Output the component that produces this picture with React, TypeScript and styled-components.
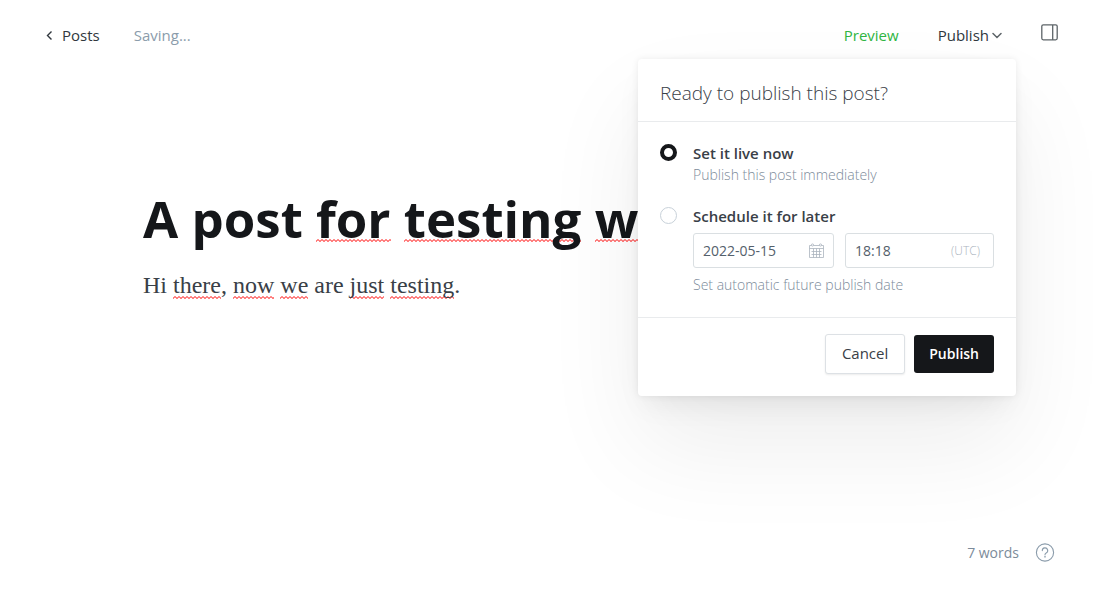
import React, { useState } from "react";
import styled, { createGlobalStyle, css } from "styled-components";

const sans = `"Open Sans", "Noto Sans", sans-serif`;

const GlobalStyle = createGlobalStyle`
  *, *::before, *::after { box-sizing: border-box; }
  body { margin: 0; background: #fff; color: #394047; font-family: ${sans}; font-size: 15px; line-height: 20px; }
  button, input { font: inherit; color: inherit; }
`;

const Screen = styled.div`
  display: flex;
  flex-direction: column;
  min-height: 100vh;
`;

const Header = styled.header`
  display: flex;
  align-items: center;
  justify-content: space-between;
  height: 70px;
  padding: 0 42px 0 45px;
`;

const HeaderGroup = styled.div<{ $gap: number }>`
  display: flex;
  align-items: center;
  gap: ${(p) => p.$gap}px;
`;

const BackLink = styled.a`
  display: flex;
  align-items: center;
  gap: 8px;
  color: #30373d;
  font-weight: 500;
  text-decoration: none;
`;

const Status = styled.span`
  color: #8b9cab;
`;

const TextButton = styled.button<{ $accent?: boolean }>`
  display: flex;
  align-items: center;
  gap: 3px;
  padding: 0;
  border: 0;
  background: none;
  font-weight: 500;
  color: ${(p) => (p.$accent ? "#30b643" : "#30373d")};
  cursor: pointer;
`;

const IconButton = styled.button`
  display: flex;
  padding: 0;
  border: 0;
  background: none;
  color: #8b9cab;
  cursor: pointer;
`;

const SettingsButton = styled(IconButton)`
  padding-bottom: 6px;
  color: #5d6468;
`;

const PublishMenu = styled.div`
  position: relative;
`;

const Popup = styled.form`
  position: absolute;
  z-index: 2;
  top: 34px;
  right: -14px;
  width: 378px;
  background: #fff;
  border-radius: 4px;
  box-shadow: 0 0 7px rgba(0, 0, 0, 0.08), 0 14px 28px -8px rgba(0, 0, 0, 0.08),
    0 50px 100px rgba(0, 0, 0, 0.07);
`;

const PopupTitle = styled.h2`
  margin: 0;
  padding: 22px 22px 16px;
  border-bottom: 1px solid #e9ebed;
  font-size: 19px;
  line-height: 24px;
  font-weight: 300;
`;

const Options = styled.fieldset`
  display: flex;
  flex-direction: column;
  gap: 22px;
  margin: 0;
  padding: 22px;
  border: 0;
`;

const Option = styled.div`
  display: grid;
  grid-template-columns: 17px minmax(0, 1fr);
  column-gap: 16px;
`;

const Radio = styled.input`
  appearance: none;
  width: 17px;
  height: 17px;
  margin: 0;
  border: 1px solid #c8d1d9;
  border-radius: 50%;
  background: #fff;
  &:checked { border: 4px solid #15171a; }
`;

const OptionLabel = styled.label`
  display: block;
  padding-bottom: 2px;
  line-height: 18px;
  font-weight: 600;
`;

const Hint = styled.p`
  margin: 1px 0 0;
  font-size: 14px;
  font-weight: 300;
  color: #7c8b9a;
`;

const Fields = styled.div`
  display: grid;
  grid-template-columns: 141fr 149fr;
  gap: 11px;
  margin: 6px 0 7px;
`;

const Field = styled.div`
  display: flex;
  align-items: center;
  min-width: 0;
  height: 35px;
  padding: 0 9px;
  border: 1px solid #dadfe2;
  border-radius: 3px;
  color: #abb4be;
`;

const FieldInput = styled.input`
  flex: 1;
  min-width: 0;
  padding: 0;
  border: 0;
  outline: 0;
  background: none;
  font-size: 14px;
  color: #54606b;
`;

const Zone = styled.span`
  padding-right: 4px;
  font-size: 12px;
  font-weight: 300;
`;

const Actions = styled.footer`
  display: flex;
  justify-content: flex-end;
  align-items: center;
  gap: 9px;
  padding: 16px 22px 22px;
  border-top: 1px solid #e9ebed;
`;

const Button = styled.button<{ $primary?: boolean }>`
  height: 40px;
  padding: 0 16px 2px;
  border: 1px solid #dde1e5;
  border-radius: 3px;
  background: #fff;
  font-weight: 500;
  box-shadow: 0 1px 2px rgba(0, 0, 0, 0.08);
  cursor: pointer;
  ${(p) =>
    p.$primary &&
    css`
      height: 38px;
      padding: 0 15px;
      border: 0;
      background: #15171a;
      color: #fff;
      font-size: 14px;
      font-weight: 600;
      box-shadow: none;
    `}
`;

const Editor = styled.main`
  flex: 1;
  padding: 114px 143px 0;
`;

const Title = styled.h1`
  margin: 0;
  color: #15171a;
  font-size: 51px;
  line-height: 68px;
  font-weight: 700;
`;

const Body = styled.p`
  margin: 17px 0 0;
  font-family: "Liberation Serif", serif;
  font-size: 24px;
  line-height: 32px;
`;

const zigzag = `url("data:image/svg+xml,%3Csvg xmlns='http://www.w3.org/2000/svg' width='4' height='3'%3E%3Cpath d='M-1 3.5 2 .5l3 3' fill='none' stroke='%23f00'/%3E%3C/svg%3E")`;

const Misspelt = styled.span<{ $lift: number }>`
  padding-bottom: 2px;
  background: ${zigzag} 0 calc(100% - ${(p) => p.$lift}px) / 4px 3px repeat-x;
`;

const Footer = styled.footer`
  display: flex;
  justify-content: flex-end;
  align-items: center;
  gap: 16px;
  padding: 0 45px 41px;
  font-size: 14px;
  color: #7c8b9a;
`;

const ChevronLeft = () => (
  <svg width="9" height="10" viewBox="0 0 9 10" fill="none" stroke="#30373d" strokeWidth="1.4" aria-hidden="true">
    <path d="M6.5 1.5 2.5 5.5l4 4" />
  </svg>
);

const ChevronDown = () => (
  <svg width="10" height="8" viewBox="0 0 10 8" fill="none" stroke="#5d6468" strokeWidth="1.5" strokeLinecap="round" aria-hidden="true">
    <path d="m1 2.5 4 4 4-4" />
  </svg>
);

const SidebarIcon = () => (
  <svg width="17" height="17" viewBox="0 0 17 17" fill="none" stroke="currentColor" strokeWidth="1.3" aria-hidden="true">
    <rect x=".8" y=".8" width="15.4" height="15" rx="1.5" />
    <path d="M11.7 1v15" />
  </svg>
);

const CalendarIcon = () => (
  <svg width="15" height="15" viewBox="0 0 15 15" fill="none" stroke="currentColor" strokeWidth=".8" aria-hidden="true">
    <path d="M2.5 2.5h-2v12h14v-12h-2M4.5 2.5h6M.5 5.5h14M2.5 8.5h10M2.5 11.5h10M4.5 5.5v9M7.5 5.5v9M10.5 5.5v9" />
    <circle cx="3.5" cy="2" r="1.1" />
    <circle cx="11.5" cy="2" r="1.1" />
  </svg>
);

const HelpIcon = () => (
  <svg width="20" height="20" viewBox="0 0 20 20" fill="none" stroke="currentColor" strokeWidth="1.1" strokeLinecap="round" aria-hidden="true">
    <circle cx="10" cy="9.5" r="8.6" />
    <path d="M7.3 7.6a2.7 2.7 0 1 1 3.9 2.4c-.8.4-1.2.8-1.2 1.7" />
    <circle cx="10" cy="13.7" r=".3" />
  </svg>
);

const bodyText: [string, boolean][] = [
  ["Hi ", false], ["there", true], [", ", false], ["now", true], [" ", false], ["we", true],
  [" are ", false], ["just", true], [" ", false], ["testing", true], [".", false],
];

export default function App() {
  const [when, setWhen] = useState("now");
  return (
    <Screen>
      <GlobalStyle />
      <Header>
        <HeaderGroup $gap={34}>
          <BackLink href="#posts"><ChevronLeft />Posts</BackLink>
          <Status>Saving...</Status>
        </HeaderGroup>
        <HeaderGroup $gap={39}>
          <TextButton type="button" $accent>Preview</TextButton>
          <PublishMenu>
            <TextButton type="button" aria-expanded="true">Publish<ChevronDown /></TextButton>
            <Popup onSubmit={(e) => e.preventDefault()}>
              <PopupTitle>Ready to publish this post?</PopupTitle>
              <Options>
                <Option>
                  <Radio type="radio" name="when" id="now" checked={when === "now"} onChange={() => setWhen("now")} />
                  <div>
                    <OptionLabel htmlFor="now">Set it live now</OptionLabel>
                    <Hint>Publish this post immediately</Hint>
                  </div>
                </Option>
                <Option>
                  <Radio type="radio" name="when" id="later" checked={when === "later"} onChange={() => setWhen("later")} />
                  <div>
                    <OptionLabel htmlFor="later">Schedule it for later</OptionLabel>
                    <Fields>
                      <Field>
                        <FieldInput aria-label="Publish date" defaultValue="2022-05-15" />
                        <CalendarIcon />
                      </Field>
                      <Field>
                        <FieldInput aria-label="Publish time" defaultValue="18:18" />
                        <Zone>(UTC)</Zone>
                      </Field>
                    </Fields>
                    <Hint>Set automatic future publish date</Hint>
                  </div>
                </Option>
              </Options>
              <Actions>
                <Button type="button">Cancel</Button>
                <Button type="submit" $primary>Publish</Button>
              </Actions>
            </Popup>
          </PublishMenu>
          <SettingsButton type="button" aria-label="Settings"><SidebarIcon /></SettingsButton>
        </HeaderGroup>
      </Header>
      <Editor>
        <Title>
          A post <Misspelt $lift={13}>for</Misspelt> <Misspelt $lift={13}>testing</Misspelt> <Misspelt $lift={13}>w</Misspelt>
        </Title>
        <Body>
          {bodyText.map(([text, wrong], i) => (wrong ? <Misspelt key={i} $lift={1}>{text}</Misspelt> : text))}
        </Body>
      </Editor>
      <Footer>
        <span>7 words</span>
        <IconButton type="button" aria-label="Help"><HelpIcon /></IconButton>
      </Footer>
    </Screen>
  );
}
